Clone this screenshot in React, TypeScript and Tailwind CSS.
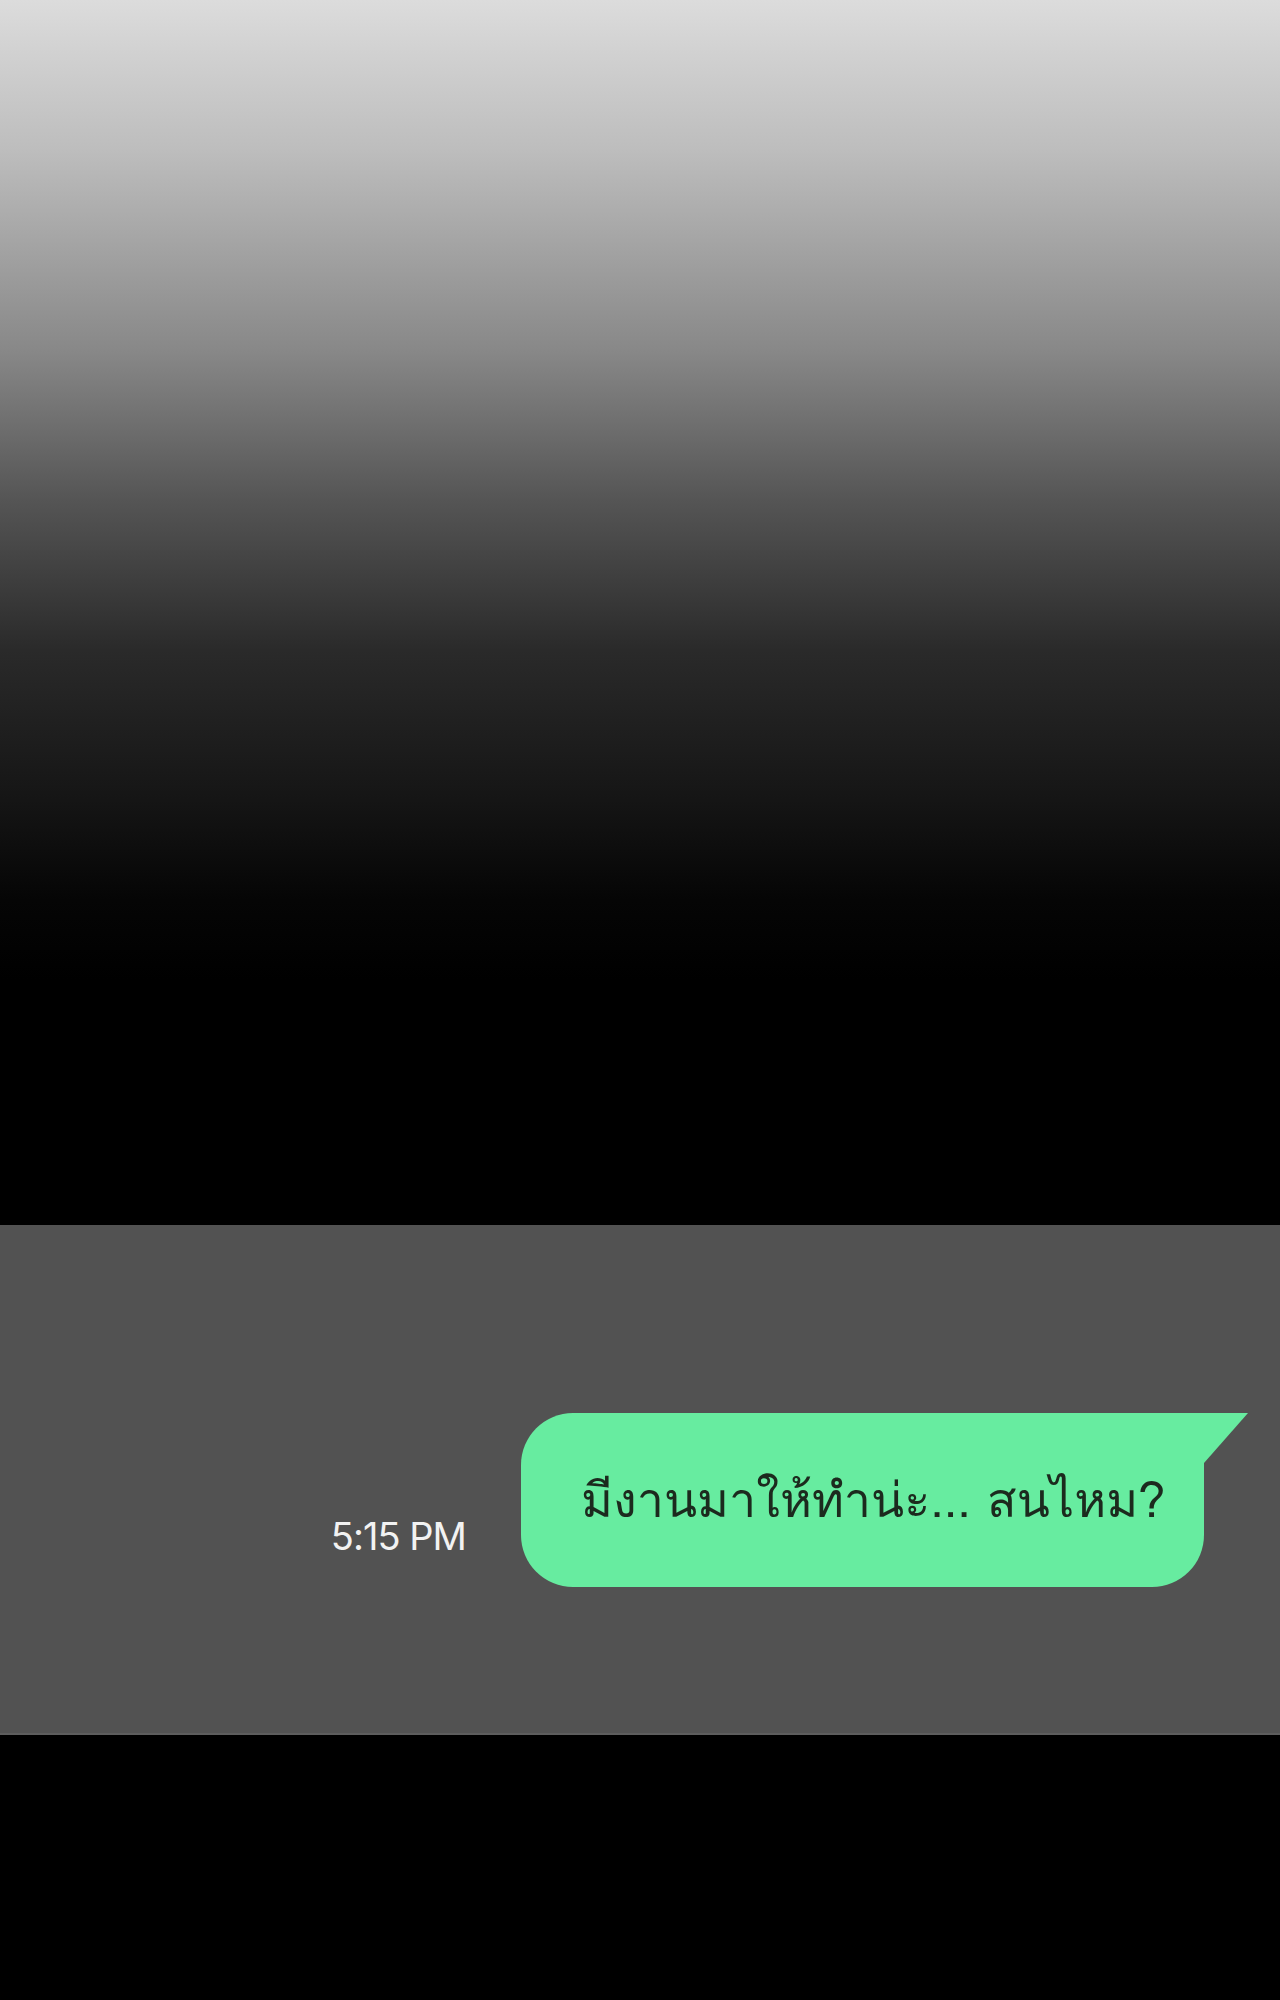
export default function App() {
  return (
    <div className="min-h-[2000px] w-full bg-black font-['Liberation_Sans',sans-serif]">
      {/* top fade */}
      <div className="h-[1225px] w-full bg-[linear-gradient(to_bottom,#dcdcdc_0px,#bdbdbd_150px,#888888_350px,#555555_500px,#2a2a2a_650px,#151515_800px,#050505_900px,#000000_980px)]"></div>

      {/* chat band */}
      <div className="h-[510px] w-full bg-[#525252] border-b-2 border-[#5d5d5d] flex justify-end items-start pt-[188px] pr-[32px]">
        <div className="flex items-end">
          <span className="mr-[55px] mb-[32px] text-[38px] leading-none text-[#f2f2f2] font-['Inter',sans-serif] tracking-tight">
            5:15 PM
          </span>
          <div className="flex items-start">
            <div className="w-[683px] h-[174px] bg-[#67eca0] rounded-[52px] rounded-tr-none flex items-center pl-[60px]">
              <p className="text-[48.5px] leading-none text-[#1c2a1e] font-['Loma','Liberation_Sans','Noto_Sans',sans-serif] whitespace-nowrap">
                มีงานมาให้ทำน่ะ... สนไหม?
              </p>
            </div>
            <svg width="44" height="50" viewBox="0 0 44 50" className="block">
              <polygon points="0,0 44,0 0,50" fill="#67eca0" />
            </svg>
          </div>
        </div>
      </div>
    </div>
  );
}
